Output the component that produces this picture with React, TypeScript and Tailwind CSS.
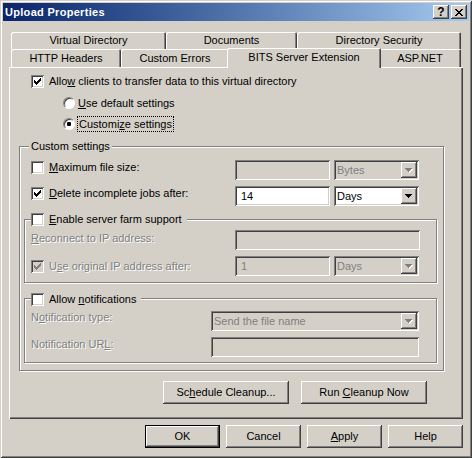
import React from 'react';

// classic 3D edges
const raised = 'shadow-[inset_-1px_-1px_0_#404040,inset_1px_1px_0_#fff,inset_-2px_-2px_0_#808080]';
const sunken = 'shadow-[inset_1px_1px_0_#808080,inset_-1px_-1px_0_#fff,inset_2px_2px_0_#404040,inset_-2px_-2px_0_#d4d0c8]';
const groove = 'border border-[#808080] shadow-[1px_1px_0_#fff,inset_1px_1px_0_#fff]';
const dim = 'text-[#808080] [text-shadow:1px_1px_0_#fff]';

function Check({ checked = false, disabled = false }: { checked?: boolean; disabled?: boolean }) {
  return (
    <span className={`relative block shrink-0 w-[13px] h-[13px] ${disabled ? 'bg-[#d4d0c8]' : 'bg-white'} ${sunken}`}>
      {checked && (
        <svg className="absolute left-[3px] top-[3px]" width="7" height="7" viewBox="0 0 7 7" shapeRendering="crispEdges">
          <path
            d="M0 2h1v3H0z M1 3h1v3H1z M2 4h1v3H2z M3 3h1v3H3z M4 2h1v3H4z M5 1h1v3H5z M6 0h1v3H6z"
            fill={disabled ? '#808080' : '#000'}
          />
        </svg>
      )}
    </span>
  );
}

function Radio({ checked = false }: { checked?: boolean }) {
  return (
    <span className="relative flex items-center justify-center shrink-0 w-[12px] h-[12px] rounded-full bg-white border border-t-[#808080] border-l-[#808080] border-r-white border-b-white shadow-[inset_1px_1px_0_#404040]">
      {checked && <span className="block w-[4px] h-[4px] rounded-[1px] bg-black" />}
    </span>
  );
}

function Arrow({ disabled = false }: { disabled?: boolean }) {
  const d = 'M0 0h7v1H0z M1 1h5v1H1z M2 2h3v1H2z M3 3h1v1H3z';
  return (
    <svg width="8" height="5" viewBox="0 0 8 5" shapeRendering="crispEdges">
      {disabled && <path d={d} fill="#fff" transform="translate(1 1)" />}
      <path d={d} fill={disabled ? '#808080' : '#000'} />
    </svg>
  );
}

function Combo({ value, width, disabled = false }: { value: string; width: string; disabled?: boolean }) {
  return (
    <div className={`flex h-[20px] p-[2px] ${width} ${sunken} ${disabled ? 'bg-[#d4d0c8] text-[#808080]' : 'bg-white'}`}>
      <span className="flex-1 pl-[1px] leading-[16px]">{value}</span>
      <span className={`flex items-center justify-center w-[16px] h-[16px] bg-[#d4d0c8] ${raised}`}>
        <Arrow disabled={disabled} />
      </span>
    </div>
  );
}

function Field({ value = '', width, disabled = false }: { value?: string; width: string; disabled?: boolean }) {
  return (
    <div className={`h-[20px] pl-[6px] leading-[20px] ${width} ${sunken} ${disabled ? 'bg-[#d4d0c8] text-[#808080]' : 'bg-white'}`}>
      {value}
    </div>
  );
}

function Button({ children, width, isDefault = false }: { children: React.ReactNode; width: string; isDefault?: boolean }) {
  return (
    <div className={`${width} h-[23px] ${isDefault ? 'border border-black' : ''}`}>
      <div className={`w-full h-full flex items-center justify-center bg-[#d4d0c8] ${raised}`}>{children}</div>
    </div>
  );
}

function Tab({ children, className }: { children: React.ReactNode; className: string }) {
  return (
    <div
      className={`flex items-center justify-center bg-[#d4d0c8] rounded-t-[2px] shadow-[inset_1px_1px_0_#fff,inset_-1px_0_0_#404040,inset_-2px_0_0_#808080] ${className}`}
    >
      {children}
    </div>
  );
}

export default function App() {
  return (
    <div className="w-[472px] h-[458px] p-[3px] flex flex-col bg-[#d4d0c8] text-black text-[11px] leading-[13px] font-['Liberation_Sans',Arial,sans-serif] shadow-[inset_1px_1px_0_#d4d0c8,inset_-1px_-1px_0_#404040,inset_2px_2px_0_#fff,inset_-2px_-2px_0_#808080] overflow-hidden">
      {/* Title bar */}
      <div className="h-[18px] shrink-0 flex items-center pl-[2px] pr-[2px] bg-linear-to-r from-[#0a246a] to-[#a6caf0]">
        <span className="flex-1 font-bold text-white tracking-[0.3px]">Upload Properties</span>
        <span className={`w-[16px] h-[14px] flex items-center justify-center bg-[#d4d0c8] font-bold text-[12px] ${raised}`}>
          ?
        </span>
        <span className={`ml-[2px] w-[16px] h-[14px] flex items-center justify-center bg-[#d4d0c8] ${raised}`}>
          <svg width="8" height="7" viewBox="0 0 8 7" shapeRendering="crispEdges">
            <path
              d="M0 0h2v1H0z M6 0h2v1H6z M1 1h2v1H1z M5 1h2v1H5z M2 2h4v1H2z M3 3h2v1H3z M2 4h4v1H2z M1 5h2v1H1z M5 5h2v1H5z M0 6h2v1H0z M6 6h2v1H6z"
              fill="#000"
            />
          </svg>
        </span>
      </div>

      {/* Tabs */}
      <div className="mt-[11px] ml-[8px] flex flex-col">
        <div className="flex h-[17px]">
          <Tab className="w-[155px]">Virtual Directory</Tab>
          <Tab className="w-[131px]">Documents</Tab>
          <Tab className="w-[164px]">Directory Security</Tab>
        </div>
        <div className="flex h-[18px]">
          <Tab className="w-[110px] h-[18px]">HTTP Headers</Tab>
          <Tab className="w-[108px] h-[18px]">Custom Errors</Tab>
          <Tab className="relative z-10 w-[154px] h-[20px] -mt-[1px] -mx-[2px] pb-[2px]">BITS Server Extension</Tab>
          <Tab className="w-[82px] h-[18px]">ASP.NET</Tab>
        </div>
      </div>

      {/* Property page */}
      <div className="ml-[6px] w-[454px] h-[352px] shrink-0 flex flex-col px-[10px] shadow-[inset_1px_1px_0_#fff,inset_-1px_-1px_0_#404040,inset_-2px_-2px_0_#808080]">
        <div className="mt-[8px] ml-[12px] h-[13px] flex items-center gap-[5px]">
          <Check checked />
          <span>
            Allo<u>w</u> clients to transfer data to this virtual directory
          </span>
        </div>
        <div className="mt-[9px] ml-[44px] h-[12px] flex items-center gap-[3px]">
          <Radio />
          <span>
            <u>U</u>se default settings
          </span>
        </div>
        <div className="mt-[7px] ml-[44px] h-[16px] flex items-center gap-[2px]">
          <Radio checked />
          <span className="h-[16px] px-[1px] leading-[14px] border border-dotted border-black">
            Customi<u>z</u>e settings
          </span>
        </div>

        {/* Custom settings */}
        <div className={`mt-[14px] w-[425px] h-[225px] shrink-0 flex flex-col ${groove}`}>
          <span className="-mt-[8px] ml-[9px] px-[2px] w-fit h-[14px] leading-[14px] bg-[#d4d0c8]">Custom settings</span>

          <div className="mt-[7px] pl-[11px] h-[20px] flex items-start">
            <div className="w-[204px] mt-[1px] h-[13px] flex items-center gap-[5px]">
              <Check />
              <span>
                <u>M</u>aximum file size:
              </span>
            </div>
            <Field width="w-[95px]" disabled />
            <div className="ml-[4px]">
              <Combo value="Bytes" width="w-[85px]" disabled />
            </div>
          </div>

          <div className="mt-[6px] pl-[11px] h-[20px] flex items-start">
            <div className="w-[204px] mt-[1px] h-[13px] flex items-center gap-[5px]">
              <Check checked />
              <span>
                <u>D</u>elete incomplete jobs after:
              </span>
            </div>
            <Field value="14" width="w-[95px]" />
            <div className="ml-[4px]">
              <Combo value="Days" width="w-[85px]" />
            </div>
          </div>

          {/* Server farm */}
          <div className={`mt-[13px] ml-[4px] w-[413px] h-[64px] shrink-0 flex flex-col ${groove}`}>
            <div className="-mt-[7px] ml-[6px] pr-[5px] w-fit h-[13px] flex items-center gap-[5px] bg-[#d4d0c8]">
              <Check />
              <span>
                <u>E</u>nable server farm support
              </span>
            </div>
            <div className="mt-[4px] pl-[6px] h-[20px] flex items-start">
              <span className={`w-[204px] mt-[2px] ${dim}`}>
                <u>R</u>econnect to IP address:
              </span>
              <Field width="w-[185px]" disabled />
            </div>
            <div className="mt-[6px] pl-[6px] h-[20px] flex items-center">
              <div className="w-[204px] flex items-center gap-[5px]">
                <Check checked disabled />
                <span className={dim}>
                  U<u>s</u>e original IP address after:
                </span>
              </div>
              <Field value="1" width="w-[95px]" disabled />
              <div className="ml-[4px]">
                <Combo value="Days" width="w-[85px]" disabled />
              </div>
            </div>
          </div>

          {/* Notifications */}
          <div className={`mt-[15px] ml-[4px] w-[413px] h-[65px] shrink-0 flex flex-col ${groove}`}>
            <div className="-mt-[6px] ml-[6px] pr-[5px] w-fit h-[13px] flex items-center gap-[5px] bg-[#d4d0c8]">
              <Check />
              <span>
                Allow <u>n</u>otifications
              </span>
            </div>
            <div className="mt-[5px] pl-[6px] h-[20px] flex items-start">
              <span className={`w-[180px] ${dim}`}>
                N<u>o</u>tification type:
              </span>
              <Combo value="Send the file name" width="w-[208px]" disabled />
            </div>
            <div className="mt-[6px] pl-[6px] h-[20px] flex items-start">
              <span className={`w-[180px] mt-[1px] ${dim}`}>
                Notification UR<u>L</u>:
              </span>
              <Field width="w-[208px]" disabled />
            </div>
          </div>
        </div>

        <div className="mt-[10px] ml-[144px] flex gap-[12px]">
          <Button width="w-[126px]">
            <span>
              Sc<u>h</u>edule Cleanup...
            </span>
          </Button>
          <Button width="w-[126px]">
            <span>
              Run <u>C</u>leanup Now
            </span>
          </Button>
        </div>
      </div>

      {/* Dialog buttons */}
      <div className="mt-[6px] mr-[6px] flex justify-end gap-[6px]">
        <Button width="w-[75px]" isDefault>
          OK
        </Button>
        <Button width="w-[75px]">Cancel</Button>
        <Button width="w-[75px]">
          <span>
            <u>A</u>pply
          </span>
        </Button>
        <Button width="w-[75px]">Help</Button>
      </div>
    </div>
  );
}
